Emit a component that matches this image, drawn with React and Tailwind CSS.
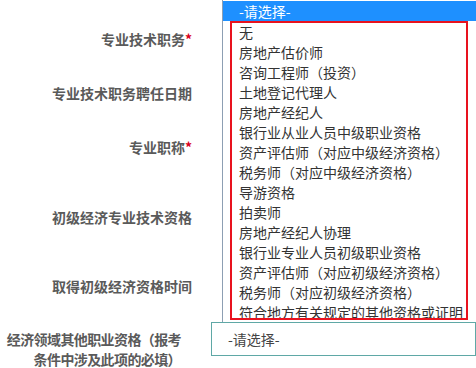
import React from 'react'

const rows = [
  { label: '专业技术职务', required: true, height: 'h-[54px]' },
  { label: '专业技术职务聘任日期', height: 'h-[54px]' },
  { label: '专业职称', required: true, height: 'h-[54px]' },
  { label: '初级经济专业技术资格', height: 'h-[86px]' },
  { label: '取得初级经济资格时间', height: 'h-[52px]' },
]

const options = [
  '无',
  '房地产估价师',
  '咨询工程师（投资）',
  '土地登记代理人',
  '房地产经纪人',
  '银行业从业人员中级职业资格',
  '资产评估师（对应中级经济资格）',
  '税务师（对应中级经济资格）',
  '导游资格',
  '拍卖师',
  '房地产经纪人协理',
  '银行业专业人员初级职业资格',
  '资产评估师（对应初级经济资格）',
  '税务师（对应初级经济资格）',
  '符合地方有关规定的其他资格或证明',
]

function FormLabel({ label, required }) {
  return (
    <div className="w-[192px] text-right text-[14px] font-bold text-[#5a5a5a]">
      {label}
      {required && <span className="text-[#d9001b]">*</span>}
    </div>
  )
}

export default function App() {
  return (
    <div
      className="relative h-[368px] w-[476px] overflow-hidden bg-white"
      style={{ fontFamily: '"Microsoft YaHei", "Noto Sans CJK SC", sans-serif' }}
    >
      <div className="pt-[12px]">
        {rows.map((row) => (
          <div key={row.label} className={`flex items-center ${row.height}`}>
            <FormLabel label={row.label} required={row.required} />
          </div>
        ))}

        <div className="flex items-start">
          <div className="mt-[17px] w-[192px] whitespace-nowrap text-right text-[14px] font-bold leading-[20px] tracking-[-0.6px] text-[#5a5a5a]">
            经济领域其他职业资格（报考
            <br />
            条件中涉及此项的必填）
          </div>
          <div className="ml-[30px] mt-[10px] flex h-[34px] w-[280px] items-center border border-[#5fa8a6] pl-[16px] text-[14px] text-[#444]">
            -请选择-
          </div>
        </div>
      </div>

      {/* opened select list */}
      <div className="absolute left-[222px] top-0 h-[322px] w-[260px] border-l border-[#8d9fb3] bg-white text-[14px] text-[#333]">
        <div className="mt-[1px] h-[20px] bg-[#1e90ff] pl-[16px] leading-[20px] text-white">-请选择-</div>
        <ul className="mt-[1px]">
          {options.map((item) => (
            <li key={item} className="h-[20px] whitespace-nowrap pl-[16px] leading-[20px]">
              {item}
            </li>
          ))}
        </ul>
      </div>

      {/* annotation box */}
      <div className="absolute left-[230px] top-[21px] h-[299px] w-[238px] border-2 border-[#e8121e]" />
    </div>
  )
}
